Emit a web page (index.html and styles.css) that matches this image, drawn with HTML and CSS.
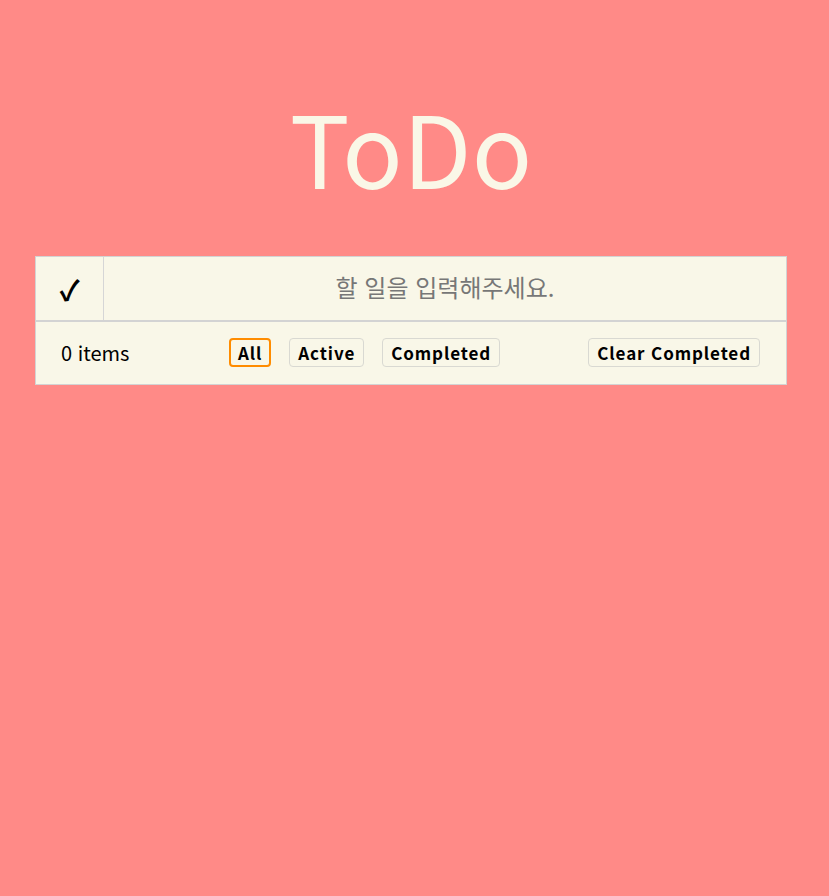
FILE: index.html
```html
<!DOCTYPE html>
<html lang="ko">
<head>
<meta charset="utf-8">
<title>ToDo</title>
<link rel="stylesheet" href="styles.css">
</head>
<body>
<div class="app">
  <h1 class="title">ToDo</h1>
  <section class="todo">
    <div class="entry">
      <button class="toggle-all">✓</button>
      <input class="new-todo" type="text" placeholder="할 일을 입력해주세요.">
    </div>
    <div class="footer">
      <span class="count">0 items</span>
      <div class="filters">
        <button class="filter selected">All</button>
        <button class="filter">Active</button>
        <button class="filter">Completed</button>
      </div>
      <button class="filter clear">Clear Completed</button>
    </div>
  </section>
</div>
</body>
</html>
```
FILE: styles.css
```css
html, body {
  margin: 0;
  padding: 0;
  background: #ff8a87;
  height: 100%;
}
body {
  font-family: "Noto Sans CJK KR", "Noto Sans", sans-serif;
}
.app {
  padding: 96px 42px 0 35px;
}
.title {
  margin: 0 0 60px;
  text-align: center;
  font-weight: 400;
  font-size: 100px;
  line-height: 100px;
  height: 100px;
  color: #faf7e7;
}
.todo {
  background: #f9f7e8;
  border: 1px solid #d3d3d3;
}
.entry {
  display: flex;
  height: 63px;
  border-bottom: 2px solid #d3d3d3;
}
.toggle-all {
  width: 68px;
  flex: none;
  border: none;
  border-right: 1px solid #d6d6d6;
  background: transparent;
  font-family: "Noto Sans CJK KR", sans-serif;
  font-weight: 700;
  font-size: 28px;
  color: #000;
  padding: 0;
}
.new-todo {
  flex: 1;
  border: none;
  background: transparent;
  text-align: center;
  font-family: "Noto Sans CJK KR", sans-serif;
  font-size: 24px;
  color: #333;
  outline: none;
  padding: 0 0 4px;
}
.new-todo::placeholder {
  color: #777;
}
.footer {
  display: flex;
  align-items: center;
  height: 62px;
  box-sizing: border-box;
  padding: 0 26px 2px 25px;
}
.count {
  font-size: 20px;
  color: #000;
  width: 168px;
}
.filters {
  display: flex;
  gap: 18px;
}
.filter {
  font-family: "Noto Sans CJK KR", sans-serif;
  font-weight: 700;
  font-size: 17px;
  letter-spacing: 0.9px;
  color: #000;
  background: transparent;
  border: 1px solid #d9d9d2;
  border-radius: 4px;
  height: 29px;
  padding: 0 8px;
  line-height: 1;
}
.filter.selected {
  border: 2px solid #ff8c00;
  padding: 0 7px;
}
.clear {
  margin-left: auto;
}
```
